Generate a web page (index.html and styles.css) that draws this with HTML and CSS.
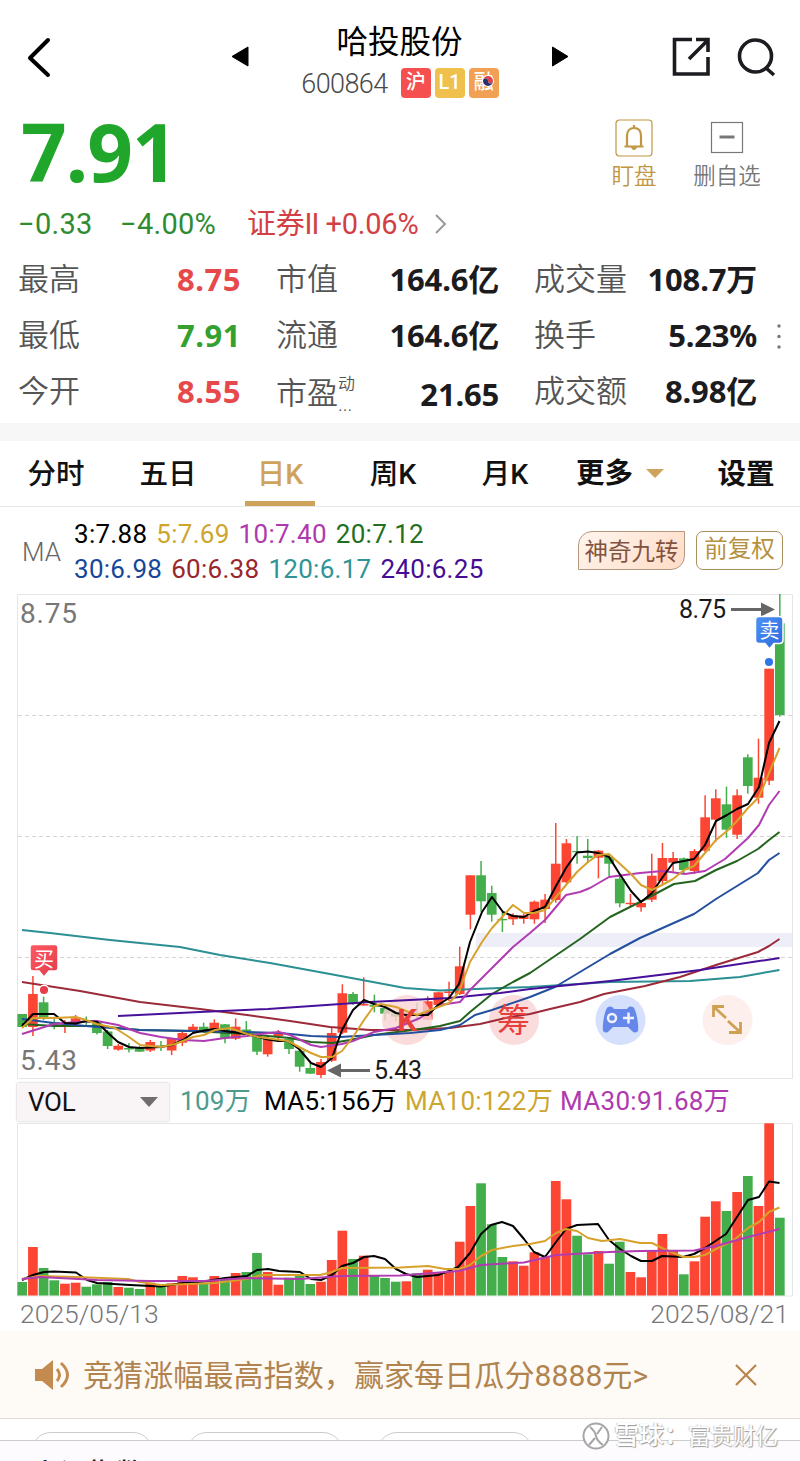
FILE: index.html
```html
<!DOCTYPE html>
<html lang="zh-CN">

<head>
    <meta charset="UTF-8">
    <meta name="viewport" content="width=device-width, initial-scale=1.0">
    <title>哈投股份 600864</title>
    <link rel="stylesheet" href="styles.css">
</head>

<body>
    <div class="page">
        <!-- 顶部导航 -->
        <div class="header">
            <svg class="back" width="40" height="60" viewBox="0 0 40 60"><path d="M30 12 L12 30 L30 47" /></svg>
            <svg class="arrow prev" width="20" height="24" viewBox="0 0 20 24"><path d="M18 1 V20 L2 10.500 Z" /></svg>
            <div class="title">
                <h1>哈投股份</h1>
                <div class="code">
                    <span class="num">600864</span>
                    <i class="tag hu">沪</i>
                    <i class="tag l1">L1</i>
                    <i class="tag rong">融<svg class="swirl" width="12" height="12" viewBox="0 0 12 12"><circle cx="6" cy="6" r="6" fill="#fff" /><path d="M1 6a5 5 0 0 1 10 0 2.5 2.5 0 0 1-5 0 2.500 2.500 0 0 0-5 0" fill="#d8434e" /><path d="M11 6a5 5 0 0 1-10 0 2.500 2.500 0 0 1 5 0 2.500 2.500 0 0 0 5 0" fill="#26306e" /></svg></i>
                </div>
            </div>
            <svg class="arrow next" width="20" height="24" viewBox="0 0 20 24"><path d="M3.500 1 V20 L19 10.500 Z" /></svg>
            <svg class="share" width="42" height="42" viewBox="0 0 42 42"><path d="M22 4.500 H4.500 V39 H38 V22 M26 4.500 H38 V17 M19 24 L37 6" /></svg>
            <svg class="search" width="42" height="42" viewBox="0 0 42 42"><circle cx="19.500" cy="19" r="16" /><path d="M30 31 L38 38" /></svg>
        </div>

        <!-- 现价 -->
        <div class="quote">
            <div class="price">7.91</div>
            <div class="act gold">
                <svg width="38" height="38" viewBox="0 0 38 38"><rect x="1" y="1" width="36" height="36" rx="3.500" /><path class="bell" d="M9.500 27.500 H28.500 M12 27 V17 C12 11.500 15 9 19 9 C23 9 26 11.500 26 17 V27 M19 9 V6 M17 28 Q19 32 21 28" /></svg>
                <span>盯盘</span>
            </div>
            <div class="act gray">
                <svg width="38" height="38" viewBox="0 0 38 38"><rect x="3.500" y="3.500" width="31" height="30" /><path class="minus" d="M11.500 18 H26.500" /></svg>
                <span>删自选</span>
            </div>
        </div>
        <div class="change">
            <span class="down">−0.33</span>
            <span class="down pct">−4.00%</span>
            <span class="up">证券<b class="two">II</b> +0.06%</span>
            <svg width="14" height="22" viewBox="0 0 14 22"><path d="M2 2 L11 11 L2 20" /></svg>
        </div>

        <!-- 指标 -->
        <div class="stats">
            <label>最高</label><em class="red">8.75</em><label>市值</label><em>164.6亿</em><label>成交量</label><em>108.7万</em>
            <label>最低</label><em class="green">7.91</em><label>流通</label><em>164.6亿</em><label>换手</label><em>5.23%</em>
            <label>今开</label><em class="red">8.55</em><label class="low">市盈<span class="dyn"><small>动</small><small class="dots">...</small></span></label><em class="low">21.65</em><label>成交额</label><em>8.98亿</em>
            <svg class="more-dots" width="6" height="30" viewBox="0 0 6 30"><circle cx="3" cy="4" r="1.700" /><circle cx="3" cy="14.500" r="1.700" /><circle cx="3" cy="25" r="1.700" /></svg>
        </div>

        <!-- 周期切换 -->
        <ul class="tabs">
            <li>分时</li>
            <li>五日</li>
            <li class="current">日K</li>
            <li>周K</li>
            <li>月K</li>
            <li class="more">更多<svg width="20" height="11" viewBox="0 0 20 11"><path d="M1 1 H19 L10 10 Z" fill="#d0a35c" /></svg></li>
            <li>设置</li>
        </ul>

        <!-- 均线 -->
        <div class="ma">
            <span class="ma-name">MA</span>
            <div class="ma-list">
                <p><span class="c3">3:7.88</span><span class="c5">5:7.69</span><span class="c10">10:7.40</span><span class="c20">20:7.12</span></p>
                <p><span class="c30">30:6.98</span><span class="c60">60:6.38</span><span class="c120">120:6.17</span><span class="c240">240:6.25</span></p>
            </div>
            <div class="btn magic">神奇九转</div>
            <div class="btn fuquan">前复权</div>
        </div>

        <!-- K线图 -->
        <svg class="kline" id="kline" width="800" height="486" viewBox="0 594 800 486">
            <defs>
                <linearGradient id="buyBg" x1="0" y1="0" x2="1" y2="1"><stop offset="0" stop-color="#ff5a62" /><stop offset="1" stop-color="#e23c4c" /></linearGradient>
                <linearGradient id="sellBg" x1="0" y1="0" x2="1" y2="1"><stop offset="0" stop-color="#4c93f5" /><stop offset="1" stop-color="#2f68dd" /></linearGradient>
            </defs>
            <path class="frame" d="M17.500 594.500 H792.500 V1078.500 H17.500 Z" />
            <path class="grid" d="M18 715.500 H792 M18 836.500 H792 M18 957.500 H792" />
            <rect x="476" y="933" width="316" height="14" fill="#eeeef9" />
            <text class="axis" x="20" y="623" textLength="57">8.75</text>
            <text class="axis" x="20" y="1070" textLength="57">5.43</text>
            <g id="candles"></g>
            <g class="tools" fill-opacity=".8">
                <circle cx="407" cy="1020" r="25" fill="#fad3d3" />
                <circle cx="514" cy="1020" r="25" fill="#fad3d3" />
                <circle cx="620.500" cy="1020" r="25" fill="#cad8fb" />
                <circle cx="727.500" cy="1020" r="25" fill="#fdebe6" />
            </g>
            <g id="lines"></g>
            <g class="tools">
                <text class="k" x="407" y="1031">K</text>
                <text class="chou" x="513.500" y="1032">筹</text>
                <path fill="#6687ea" d="M608 1007 Q612 1005.500 614 1009 H627 Q629 1005.500 633 1007 C636 1008 639 1025 638 1031 Q635 1034 632 1031 L628 1027 H613 L609 1031 Q606 1034 603 1031 C602 1025 605 1008 608 1007 Z" />
                <circle cx="612" cy="1018" r="4" fill="none" stroke="#eef2ff" stroke-width="2.500" />
                <path d="M623 1018 H634 M628.500 1012.500 V1023.500" stroke="#eef2ff" stroke-width="2.500" />
                <path d="M713.500 1017 V1006.500 H724 M714 1007 L726 1018 M728 1021 L740 1032 M740.500 1022 V1032.500 H729" fill="none" stroke="#cfa052" stroke-width="2.800" />
            </g>
            <!-- 最高最低价 -->
            <text class="mark" x="679" y="618" textLength="47">8.75</text>
            <path d="M731 609.500 H763" stroke="#666" stroke-width="3" />
            <path d="M761 602.500 L775 609.500 L761 616.500 Z" fill="#666" />
            <text class="mark" x="374" y="1079" textLength="48">5.43</text>
            <path d="M338 1070.500 H370" stroke="#666" stroke-width="3" />
            <path d="M341 1063.500 L327 1070.500 L341 1077.500 Z" fill="#666" />
            <!-- 买卖点 -->
            <g class="point">
                <path d="M33 944.500 H55 Q58 944.500 58 947.500 V968 Q58 971 55 971 H49 L44 977 L39 971 H33 Q30 971 30 968 V947.500 Q30 944.500 33 944.500 Z" fill="url(#buyBg)" />
                <text x="44" y="966.500">买</text>
                <circle cx="44" cy="990" r="4.800" fill="#e5404a" />
                <path d="M759 616.500 H779 Q783 616.500 783 620 V640 Q783 643.500 779 643.500 H774 L769.500 649 L765 643.500 H759 Q755.500 643.500 755.500 640 V620 Q755.500 616.500 759 616.500 Z" fill="url(#sellBg)" />
                <text x="769.500" y="638">卖</text>
                <circle cx="769" cy="662" r="4.800" fill="#2f74e8" />
            </g>
        </svg>

        <!-- 成交量 -->
        <div class="vol-bar">
            <div class="vol-select">VOL<svg width="20" height="12" viewBox="0 0 20 12"><path d="M1 1 H19 L10 11 Z" fill="#716c6d" /></svg></div>
            <span class="v1">109万</span>
            <span class="v5">MA5:156万</span>
            <span class="v10">MA10:122万</span>
            <span class="v30">MA30:91.68万</span>
        </div>
        <svg class="volume" width="800" height="174" viewBox="0 1123 800 174">
            <path class="frame" d="M17.500 1123.500 H792.500 V1296 H17.500 Z" />
            <g id="bars"></g>
            <g id="volLines"></g>
        </svg>
        <div class="dates"><span>2025/05/13</span><span>2025/08/21</span></div>

        <!-- 公告 -->
        <div class="notice">
            <svg class="horn" width="38" height="34" viewBox="0 0 38 34"><path d="M1 11 H8 L19 2 V32 L8 23 H1 Z" fill="#c48b50" /><path d="M23 11 Q28 17 23 23 M27 5 Q40 17 27 29" fill="none" stroke="#c48b50" stroke-width="3" /></svg>
            <span>竞猜涨幅最高指数，赢家每日瓜分8888元&gt;</span>
            <svg class="close" width="24" height="24" viewBox="0 0 24 24"><path d="M2 2 L22 22 M22 2 L2 22" /></svg>
        </div>
        <div class="pills"><i></i><i></i><i></i></div>
        <div class="index-bar">上证指数</div>

        <div class="watermark">
            <svg width="28" height="28" viewBox="0 0 28 28"><circle cx="14" cy="14" r="12.500" /><path d="M8 5 Q13 9 14 14 Q15 19 21 23 M20 5 L15 12 M13 16 L7 23" /></svg>
            <b>雪球：</b><span>富贵财亿</span>
        </div>
    </div>
    <script src="chart.js"></script>
</body>

</html>
```
FILE: styles.css
```css
* {
    box-sizing: border-box;
}
body {
    margin: 0;
    background-color: #fff;
    font-family: Roboto, "Noto Sans CJK SC", sans-serif;
    color: #1c1c1e;
}
h1, p, ul {
    margin: 0;
    padding: 0;
    list-style: none;
    font-weight: normal;
}
i, em {
    font-style: normal;
}
svg {
    display: block;
    flex: none;
}
.page {
    position: relative;
    width: 800px;
    height: 1461px;
    overflow: hidden;
}
/* 顶部 */
.header {
    display: flex;
    height: 112px;
    padding: 28px 22px 0 18px;
}
.header svg {
    fill: none;
    stroke: #1b1c20;
    stroke-width: 3.6;
}
.header .back {
    stroke: #000;
    stroke-width: 4;
    stroke-linecap: round;
    stroke-linejoin: round;
}
.header .arrow {
    margin-top: 18px;
    fill: #000;
    stroke: #000;
    stroke-width: 1;
}
.header .prev {
    margin-left: 172px;
}
.title {
    width: 200px;
    margin: -6px 50px 0;
    text-align: center;
}
.title h1 {
    height: 42px;
    line-height: 42px;
    font-size: 31.5px;
    color: #000;
}
.code {
    display: flex;
    justify-content: center;
    align-items: center;
    gap: 4px;
    height: 38px;
    margin-left: 1px;
    font-size: 27px;
    color: #4a4a4a;
}
.num {
    margin: 2px 9px 0 0;
    letter-spacing: -.6px;
    font-weight: 350;
}
.tag {
    position: relative;
    width: 30px;
    height: 30px;
    line-height: 29px;
    border-radius: 4px;
    font-size: 20px;
    font-weight: 500;
    color: #fff;
}
.hu {
    background-color: #f5504f;
}
.l1 {
    background-color: #f0c04d;
}
.rong {
    background-color: #f2a054;
}
.header .swirl {
    position: absolute;
    left: 13px;
    top: 7px;
    stroke: none;
}
.header .share {
    margin: 7px 24px 0 101px;
}
.header .search {
    margin-top: 9px;
}
/* 现价 */
.quote {
    display: flex;
    height: 88px;
    padding-left: 21px;
}
.price {
    width: 579px;
    margin-top: -3px;
    line-height: 84px;
    font-family: "Noto Sans", sans-serif;
    font-size: 80px;
    font-weight: bold;
    letter-spacing: -1px;
    color: #20a62a;
}
.act {
    display: flex;
    flex-direction: column;
    align-items: center;
    width: 68px;
    padding-top: 7px;
    font-size: 22.5px;
    font-weight: 350;
    line-height: 38px;
    white-space: nowrap;
}
.act + .act {
    margin-left: 25px;
}
.act svg {
    fill: none;
    stroke-width: 1.2;
    stroke: currentColor;
}
.act .bell {
    stroke-width: 2.2;
}
.act .minus {
    stroke-width: 3;
}
.gold {
    color: #bf9642;
}
.gray {
    color: #777;
}
/* 涨跌 */
.change {
    display: flex;
    align-items: center;
    height: 48px;
    padding-left: 18px;
    font-size: 29px;
    font-weight: 400;
    line-height: 46px;
}
.down {
    width: 102px;
    color: #2f8b32;
    letter-spacing: .3px;
}
.pct {
    width: 127px;
}
.up {
    width: 187px;
    color: #d23f44;
    letter-spacing: -.2px;
    white-space: nowrap;
}
.two {
    font-weight: 400;
    letter-spacing: -1px;
}
.change svg {
    fill: none;
    stroke: #999;
    stroke-width: 2;
}
/* 指标 */
.stats {
    position: relative;
    display: grid;
    grid-template-columns: 110px 113px 110px 148px 131px 127px;
    grid-template-rows: 56px 56px 56px;
    height: 175px;
    padding: 3px 0 0 18px;
    line-height: 56px;
    white-space: nowrap;
}
.stats label {
    padding-top: 1px;
    font-size: 31px;
    font-weight: 350;
    color: #555;
}
.stats label:nth-of-type(3n+2), .stats label:nth-of-type(3n) {
    padding-left: 35px;
}
.stats em {
    font-family: "Noto Sans", "Noto Sans CJK SC", sans-serif;
    font-size: 31px;
    font-weight: bold;
    text-align: right;
    letter-spacing: -.2px;
}
.stats .red {
    color: #e6494c;
    letter-spacing: .5px;
}
.stats .green {
    color: #33a02f;
    letter-spacing: .5px;
}
.stats .low {
    padding-top: 3px;
}
.dyn {
    display: inline-flex;
    flex-direction: column;
    height: 44px;
    vertical-align: middle;
    line-height: 20px;
}
.dyn small {
    font-size: 17px;
}
.dyn .dots {
    height: 20px;
    font-size: 20px;
    line-height: 20px;
}
.more-dots {
    position: absolute;
    left: 776px;
    top: 74px;
    fill: #777;
}
/* 切换 */
.tabs {
    display: flex;
    height: 84px;
    border-top: 18px solid #f7f7f7;
    border-bottom: 1px solid #e7e7e7;
    font-size: 28.5px;
    font-weight: 500;
    line-height: 68px;
    color: #111;
}
.tabs li {
    width: 112px;
    text-align: center;
}
.tabs li:nth-child(2) {
    margin-right: 22px;
}
.tabs .current {
    width: 70px;
    margin: 0 22px 0 -1px;
    height: 65px;
    border-bottom: 5px solid #cda35c;
    color: #d0a35c;
}
.tabs .more {
    display: flex;
    align-items: center;
    gap: 12px;
    width: 131px;
    padding-left: 15px;
    font-weight: bold;
}
.tabs li:last-child {
    width: 108px;
    font-weight: bold;
}
/* 均线 */
.ma {
    display: flex;
    align-items: center;
    height: 87px;
    padding: 2px 17px 0 22px;
    font-size: 26px;
    font-weight: 350;
}
.ma-name {
    width: 52px;
    color: #666;
}
.ma-list p {
    display: flex;
    gap: 9px;
    line-height: 35px;
    letter-spacing: .28px;
    font-weight: 400;
    white-space: nowrap;
}
.c3, .v5 { color: #000; }
.c5, .v10 { color: #cda62f; }
.c10, .v30 { color: #ae3aae; }
.c20 { color: #22701f; }
.c30 { color: #16479a; }
.c60 { color: #9a262d; }
.c120 { color: #2f9496; }
.c240 { color: #450c94; }
.btn {
    height: 39px;
    margin-top: -2px;
    border: 1px solid #a9905a;
    border-radius: 7px;
    font-size: 23.5px;
    font-weight: 400;
    line-height: 35px;
    text-align: center;
}
.magic {
    width: 107px;
    margin-left: auto;
    border-color: #b5977f;
    border-radius: 14px 0;
    background: linear-gradient(135deg, #fff5ee, #ffdcc6);
    color: #83533f;
    line-height: 40px;
}
.fuquan {
    width: 87px;
    margin-left: 11px;
    color: #b5913f;
}
/* K线 */
.kline {
    overflow: visible;
}
.frame {
    fill: none;
    stroke: #e6e6e6;
}
.grid {
    stroke: #d4d4d4;
    stroke-dasharray: 4 3;
}
.axis {
    font-size: 28px;
    font-weight: 400;
    fill: #777;
}
.mark {
    font-size: 25px;
    font-weight: 400;
    fill: #1a1a1a;
}
.line {
    fill: none;
    stroke-width: 2;
    stroke-linejoin: round;
}
.tools text, .point text {
    text-anchor: middle;
}
.tools .k {
    font-size: 31px;
    font-weight: bold;
    fill: #e8413c;
}
.tools .chou {
    font-size: 33px;
    fill: #e8413c;
}
.point path, .point circle {
    stroke: #fff;
    stroke-width: 1.5;
}
.point text {
    font-size: 20px;
    fill: #fff;
}
/* 成交量 */
.vol-bar {
    display: flex;
    align-items: center;
    height: 43px;
    padding-left: 17px;
    font-size: 26px;
    font-weight: 400;
    line-height: 36px;
    letter-spacing: .3px;
    white-space: nowrap;
}
.vol-bar span {
    margin-top: -2px;
}
.vol-select {
    display: flex;
    justify-content: space-between;
    align-items: center;
    width: 152px;
    height: 38px;
    padding: 0 10px 0 11px;
    margin-right: 11px;
    background-color: #f9f4f6;
    box-shadow: 0 0 2px #bbb;
    font-weight: 400;
    letter-spacing: -.3px;
    color: #111;
}
.v1 {
    width: 84px;
    color: #4d9b8d;
}
.v5 {
    width: 141px;
}
.v10 {
    width: 155px;
}
.dates {
    display: flex;
    justify-content: space-between;
    height: 34px;
    padding: 0 11px 0 20px;
    font-size: 26.5px;
    font-weight: 350;
    line-height: 34px;
    color: #777;
}
/* 公告 */
.notice {
    display: flex;
    align-items: center;
    height: 88px;
    padding: 0 42px 0 34px;
    border-bottom: 1px solid #ddd;
    background-color: #fefaf6;
    font-size: 30px;
    font-weight: 400;
    line-height: 40px;
    letter-spacing: .1px;
    color: #b0834f;
    white-space: nowrap;
}
.notice span {
    margin: 2px 0 0 11px;
}
.close {
    margin-left: auto;
    fill: none;
    stroke: #b9854c;
    stroke-width: 2.2;
}
.pills {
    display: flex;
    height: 22px;
    padding: 13px 0 0 31px;
    border-bottom: 1px solid #ccc;
    overflow: hidden;
}
.pills i {
    width: 122px;
    height: 40px;
    margin-right: 34px;
    border: 1px solid #ccc;
    border-radius: 20px;
}
.pills i + i {
    width: 156px;
}
.index-bar {
    height: 20px;
    padding: 16px 0 0 32px;
    background-color: #fdfbfd;
    font-size: 28px;
    font-weight: 500;
    line-height: 36px;
    overflow: hidden;
}
.watermark {
    position: absolute;
    left: 582px;
    top: 1422px;
    display: flex;
    align-items: center;
    height: 28px;
    font-size: 22.5px;
    line-height: 28px;
    color: #fff;
    text-shadow: 1px 1px 1px #999, -1px 0 1px #ccc;
    white-space: nowrap;
}
.watermark b {
    width: 76px;
    margin-left: 4px;
    font-size: 25px;
    font-weight: 500;
}
.watermark span {
    margin-left: -2px;
}
.watermark svg {
    fill: #fff;
    stroke: #a5a5a5;
    stroke-width: 2;
}
```
FILE: chart.js
```javascript
let SVG = 'http://www.w3.org/2000/svg',
    RED = '#fd4533',
    GREEN = '#43ae4b',
    step = 10.67,
    start = 22.2;

//[涨跌, 最高, 实体上, 实体下, 最低, 成交量顶部]
let days = [
    ['g', 1014, 1014, 1027, 1027, 1282], ['r', 976, 994, 1027, 1036, 1247], ['g', 996.7, 1002.3, 1019, 1020, 1268],
    ['g', 1016.7, 1022, 1025.3, 1029.3, 1280.3], ['r', 1020, 1024.5, 1026.5, 1033, 1283.7], ['r', 1015, 1018.3, 1023, 1027, 1282.7],
    ['g', 1016.5, 1021, 1022.5, 1025, 1286.7], ['g', 1020, 1021.5, 1033, 1034.5, 1284.3], ['g', 1030, 1031.5, 1046, 1049, 1282],
    ['r', 1044, 1045.7, 1049.7, 1050.7, 1287], ['g', 1043, 1048, 1049.5, 1052.5, 1287.7], ['g', 1046, 1048, 1051.7, 1052, 1289],
    ['r', 1040, 1042, 1050.5, 1052, 1282.7], ['g', 1041, 1045.5, 1047, 1051, 1286.7], ['r', 1038, 1038.5, 1050.5, 1055, 1283.3],
    ['r', 1031.7, 1033, 1042.7, 1046, 1276], ['r', 1024, 1026.7, 1031.7, 1033, 1277.3], ['g', 1022.7, 1026.7, 1031.3, 1033, 1282.7],
    ['r', 1019.3, 1022.7, 1030, 1031, 1276], ['g', 1024, 1024.3, 1038.7, 1043.3, 1280], ['r', 1018.3, 1026.7, 1038.7, 1040, 1273],
    ['g', 1021, 1029.5, 1031, 1035, 1272], ['g', 1032, 1033.3, 1051.7, 1055, 1253], ['r', 1036, 1038, 1054.3, 1056.7, 1272],
    ['r', 1030, 1034, 1036, 1039, 1284.7], ['g', 1037, 1039, 1049, 1054, 1277.7], ['g', 1049, 1050.7, 1066.7, 1071.7, 1274.3],
    ['g', 1063, 1068, 1073.7, 1074, 1284], ['r', 1059, 1062, 1075, 1078, 1281.7], ['r', 1026.7, 1033, 1060.7, 1062, 1260],
    ['r', 984.3, 993.3, 1032.7, 1034, 1230.7], ['g', 992, 994, 1004, 1005, 1259], ['r', 977.3, 1004, 1005.5, 1005.5, 1255.7],
    ['g', 994.7, 1004.7, 1006.7, 1012.3, 1276], ['g', 1007, 1008, 1013.7, 1020, 1278], ['g', 1011, 1012.3, 1016.7, 1021, 1281.7],
    ['r', 1010, 1015, 1019, 1021, 1281.3], ['g', 1002.7, 1013.5, 1015, 1021.3, 1273.3], ['r', 996.3, 1001.3, 1019.7, 1020, 1269.7],
    ['r', 992, 992.3, 1005, 1006, 1272.3], ['r', 981.7, 991.5, 993, 1001, 1271], ['r', 946.7, 966.3, 994, 995, 1241.7],
    ['r', 875.3, 875.3, 914.7, 929.3, 1206], ['g', 861, 875.3, 901.3, 911.7, 1183.3], ['g', 885.7, 893, 914.7, 921.7, 1224.3],
    ['g', 911, 919, 920.3, 932, 1257], ['r', 913.3, 915.3, 919.3, 925, 1261.3], ['r', 914, 915.5, 919, 923.7, 1265.7],
    ['r', 900.5, 901.7, 919.3, 923.7, 1252.3], ['r', 894, 899.7, 909, 923, 1257.3], ['r', 823, 863.7, 900, 902.7, 1181],
    ['r', 839, 843.3, 882.3, 883, 1199.3], ['g', 836, 851, 852.3, 863.7, 1235.7], ['g', 839, 855.7, 858, 862.7, 1254.3],
    ['r', 850, 850.7, 857.7, 878.3, 1251], ['g', 854, 857, 863.7, 876, 1263.7], ['g', 875, 878.7, 903.3, 907.3, 1241.7],
    ['r', 894, 902.8, 904.2, 906.7, 1272], ['r', 900, 903, 907.3, 911.7, 1277.3], ['r', 853.7, 875.7, 899.7, 902, 1250.7],
    ['r', 843, 858, 881, 884, 1234], ['r', 852, 858, 862.7, 871.7, 1250.3], ['g', 857.5, 858.3, 870, 874, 1274.3],
    ['r', 849, 851, 871, 874, 1261.3], ['r', 795.3, 817.3, 850.7, 852, 1216.7], ['r', 789.3, 798.3, 819.7, 841.7, 1201.3],
    ['g', 786.7, 804.3, 829.7, 837.7, 1211], ['r', 789.3, 795.3, 834.7, 839, 1192], ['g', 754.3, 757.3, 786, 793.7, 1176],
    ['r', 738.7, 777.7, 797.7, 803.7, 1206], ['r', 668.7, 668.7, 780.7, 785, 1123.3], ['g', 594, 623.3, 715, 716.7, 1217.7]
];

//均线
let maLines = [
    ['#2b8f93', '22,930 50,933 110,940 180,947 220,955 270,963 330,974 405,988 440,990.5 500,988 530,987 610,982 690,981 740,977 779.5,970'],
    ['#9c2a38', '22,982 80,991 140,1002 200,1009 247,1015 290,1021 330,1027 370,1030 410,1030 450,1028 480,1024 510,1017 530,1014 550,1009 580,1002 604,994 645,986 680,977 716,965 758,952 769,946 779.5,939'],
    ['#25641f', '22,1024 54,1026 97,1026 140,1030 193,1031 247,1034 290,1038 311,1042 332,1043 350,1040 374,1035 420,1029 440,1026 460,1021 470,1012 492,994 513,982 530,973 555,956 580,939 610,917 640,902 674,884 695,881 716,870 737,861 758,849 769,840 779.5,832'],
    ['#244f9f', '22,1019 54,1023 97,1027 140,1030 193,1031 247,1032 280,1033 311,1036 340,1037 374,1035 410,1033 440,1030 460,1025 475,1015 492,1010 530,997 555,987 580,972 610,954 640,938 694,914 716,899 758,873 769,860 779.5,853'],
    ['#47109b', '118,1016 200,1012 268,1009 370,1002 450,998 500,993 530,989 610,981 700,970 779.5,958'],
    ['#b13cb2', '22,1034 54,1024 76,1022 97,1021 118,1025 140,1033 161,1037 183,1040 204,1041 225,1038 247,1036 260,1034 279,1032 290,1035 311,1045 321,1047 342,1044 353,1041 374,1032 396,1028 420,1018 440,1005 460,1002 470,990 492,968 513,947 530,933 545,920 556,907 566,895 580,892 590,888 609,877 640,873 663,871 685,874 705,871 725,859 737,848 748,838 759,825 769,805 779.5,791'],
    ['#000', '22,1026 33,1014 54,1014 65,1023 76,1023.5 86,1021 97,1022 108,1033 118,1042 129,1047 140,1048 161,1047 172,1045 183,1040 193,1033 204,1030.5 215,1029 225,1031 247,1034 258,1037 268,1039.5 278,1041 288,1041 299,1049 311,1063 321,1067 332,1058 342,1030 353,1010 364,1000 374,1004 385,1007 396,1013 406,1015 428,1015 438,1005 449,998 459,984 470,942 482,912 492,897 503,912 513,916 524,917 534,911 545,907 556,886 566,868 577,852.5 588,851.5 598,853 609,857 619,873 631,891 641,902 652,893 662,878 673,863 684,861 694,859 705,845 716,821 727,815 737,809 748,804 759,787 769,743 779.5,721'],
    ['#d7a12b', '22,1028 33,1018 54,1018 76,1017 86,1020 97,1024 115,1028 129,1037 140,1045 161,1047 175,1044 193,1037 204,1035 215,1030 230,1028 247,1034 258,1037 288,1041 299,1047 311,1053 321,1057 332,1057 342,1051 353,1037 364,1020 374,1006 381,1004 396,1007 406,1011 417,1015 428,1011 449,1003 459,992 470,962 482,942 492,928 503,916 513,905 524,913 534,913 545,910 556,897 566,885 577,872 588,862 598,855 609,854 619,863 631,874 641,885 652,890 662,885 673,879 684,870 694,866 705,853 716,840 727,831 737,821 748,808 759,797 769,773 779.5,748']
];
let volMa = [
    ['#000', '22,1280 33,1275 44,1272 54,1271.5 76,1272.5 87,1280 97,1283 130,1285 161,1286.5 183,1283 204,1281.5 225,1278 247,1276 257,1270 268,1269 279,1271 300,1272 311,1279 321,1280 332,1275 342,1266 353,1263 364,1257 374,1256 385,1259 396,1269 406,1274 417,1277 438,1275 449,1271 458,1267 470,1253 481,1234 491,1225 502,1222 513,1226 524,1239 534,1252 545,1257 556,1242 566,1229 577,1225 598,1224 609,1240 620,1249 631,1256 641,1261 652,1261 662,1256 683,1257 694,1254 705,1248 726,1234 737,1217 748,1200 759,1197 769,1181.5 779.5,1183'],
    ['#d7a12b', '22,1279 40,1276 76,1277 128,1279 140,1282 161,1285 215,1283 247,1279 262,1275 320,1275 332,1272 342,1268 400,1267.5 428,1266 445,1269 459,1269 470,1265 481,1256 492,1250 513,1246 530,1244 545,1241 556,1233 566,1229 577,1231 588,1238 602,1241 620,1239 640,1243 652,1243 662,1248 683,1257 694,1257 705,1255 716,1249 734,1240 748,1228 759,1222 769,1212 779.5,1207.5'],
    ['#b13cb2', '22,1279 40,1277 97,1280 150,1281 204,1281 247,1278 300,1279 342,1276 400,1275.5 459,1271 481,1265 524,1262.5 556,1255 609,1252 640,1251 694,1250.5 716,1246 748,1237 779.5,1229']
];

function add(parent, name, attrs) {
    let el = document.createElementNS(SVG, name);
    for (let k in attrs) {
        el.setAttribute(k, attrs[k]);
    }
    document.getElementById(parent).appendChild(el);
}

days.forEach((d, i) => {
    let x = start + step * i,
        color = d[0] == 'r' ? RED : GREEN;
    //影线
    add('candles', 'rect', { x: x - .7, y: d[1], width: 1.5, height: d[4] - d[1], fill: color });
    //实体
    add('candles', 'rect', { x: x - 4.8, y: d[2], width: 9.7, height: d[3] - d[2], fill: color });
    add('bars', 'rect', { x: x - 4.8, y: d[5], width: 9.7, height: 1295.5 - d[5], fill: color });
});
maLines.forEach(l => add('lines', 'polyline', { points: l[1], stroke: l[0], class: 'line' }));
volMa.forEach(l => add('volLines', 'polyline', { points: l[1], stroke: l[0], class: 'line' }));
```
